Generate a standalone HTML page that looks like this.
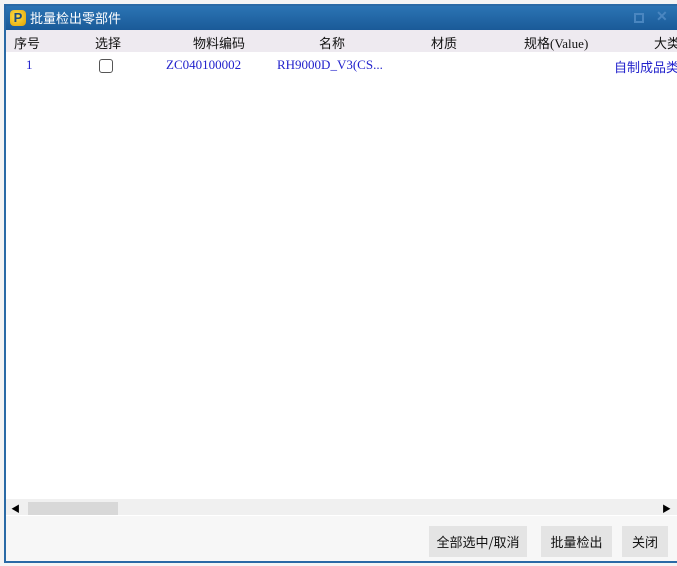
<!DOCTYPE html>
<html><head><meta charset="utf-8"><style>
*{margin:0;padding:0;box-sizing:border-box}
body{width:677px;height:566px;background:#f4f4f4;position:relative;overflow:hidden;font-family:"Liberation Serif","Noto Sans CJK SC",serif;font-size:13px}
.win{position:absolute;left:4px;top:4px;width:680px;height:559px;border:2px solid #2a6aa6;border-right:none;background:#fff}
.title{position:absolute;left:0;top:0;right:0;height:24px;background:linear-gradient(#2b74b4,#1a5a98);color:#fff;font-family:"Noto Sans CJK SC",sans-serif;font-size:13px;line-height:24px;padding-left:24px}
.logo{position:absolute;left:4px;top:4px;width:16px;height:16px;border-radius:4px;background:radial-gradient(circle at 40% 40%,#ffe24a,#e0a000);color:#1a4a80;font:bold 13px/16px "Liberation Sans",sans-serif;text-align:center}
.hdr{position:absolute;left:0;top:24px;right:0;height:22px;background:#eeeaf0;font-family:"Noto Sans CJK SC",sans-serif;font-size:13px;color:#111}
.hdr span,.row span{position:absolute;top:3px;white-space:nowrap}
.row{position:absolute;left:0;top:48px;right:0;height:22px;color:#2222cc}
.cb{position:absolute;left:93px;top:53px;width:14px;height:14px;border:1px solid #555;border-radius:3px;background:#fff}
.sb{position:absolute;left:0;top:493px;right:0;height:16px;background:#f0f0f0}
.thumb{position:absolute;left:22px;top:496px;width:90px;height:13px;background:#d8d8d8}
.foot{position:absolute;left:0;top:510px;right:0;bottom:0;background:#f7f7f7}
.btn{position:absolute;top:520px;height:31px;background:#e4e4e4;font-family:"Noto Sans CJK SC",sans-serif;font-size:13px;line-height:31px;text-align:center;color:#111}
</style></head><body>
<div class="win">
<div class="title"><div class="logo">P</div>批量检出零部件
<div style="position:absolute;left:628px;top:7px;width:10px;height:10px;border:2px solid #4a86c0"></div>
<div style="position:absolute;left:650px;top:2px;color:#4a86c0;font:bold 14px sans-serif">✕</div></div>
<div class="hdr">
<span style="left:8px">序号</span><span style="left:89px">选择</span><span style="left:187px">物料编码</span><span style="left:313px">名称</span><span style="left:425px">材质</span><span style="left:518px">规格<span style="position:static;font-family:'Liberation Serif',serif">(Value)</span></span><span style="left:648px">大类</span>
</div>
<div class="row">
<span style="left:20px">1</span><span style="left:160px">ZC040100002</span><span style="left:271px">RH9000D_V3(CS...</span><span style="left:608px;font-family:'Noto Sans CJK SC',sans-serif">自制成品类</span>
</div>
<div class="cb"></div>
<div class="sb"></div><div class="thumb"></div>
<div style="position:absolute;left:5px;top:496px;font-size:9px">◀</div>
<div style="position:absolute;left:656px;top:496px;font-size:9px">▶</div>
<div class="foot"></div>
<div class="btn" style="left:423px;width:98px">全部选中/取消</div>
<div class="btn" style="left:535px;width:71px">批量检出</div>
<div class="btn" style="left:616px;width:46px">关闭</div>
</div>
</body></html>
